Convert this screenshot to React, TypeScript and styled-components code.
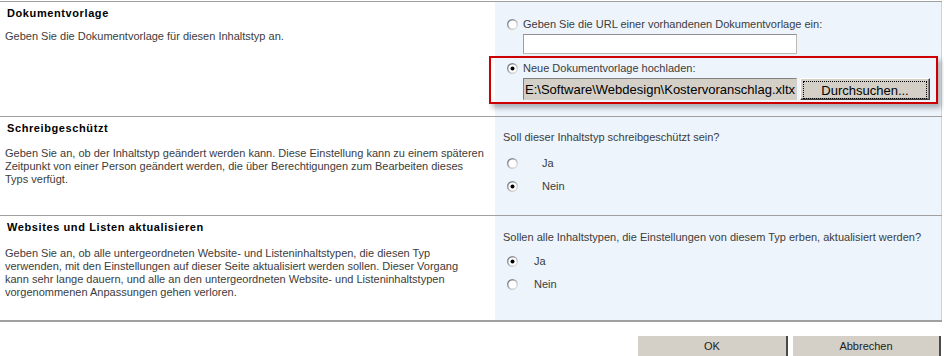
import React from 'react';
import styled, { createGlobalStyle } from 'styled-components';

const GlobalStyle = createGlobalStyle`
  body {
    margin: 0;
    background: #fff;
    font-family: "Liberation Sans", Arial, sans-serif;
    font-size: 11px;
    color: #3c3c3c;
  }
`;

const Page = styled.div`
  width: 944px;
  padding-top: 1px;
`;

const Section = styled.div<{ $h: number; $last?: boolean }>`
  display: grid;
  grid-template-columns: 495px 447px;
  width: 942px;
  height: ${p => p.$h}px;
  border-top: 1px solid #a0a0a0;
  border-bottom: ${p => (p.$last ? '2px solid #a0a0a0' : 'none')};
`;

// linke Spalte: Titel + Beschreibung
const InfoCol = styled.div`
  padding: 5px 5px 0 5px;
`;

const Title = styled.h3`
  margin: 0 0 0 2px;
  font-size: 11px;
  line-height: 13px;
  font-weight: bold;
  letter-spacing: 0.6px;
  color: #000;
`;

const Desc = styled.p<{ $gap: number }>`
  margin: ${p => p.$gap}px 0 0;
  line-height: 13px;
  white-space: nowrap;
`;

// rechte Spalte: Steuerelemente
const FieldCol = styled.div<{ $top: number }>`
  background: #edf4fb;
  border-right: 1px solid #cfd3d8;
  padding: ${p => p.$top}px 0 0 8px;
`;

const Question = styled.div`
  line-height: 13px;
`;

const OptionRow = styled.label<{ $gap: number; $mt?: number; $pl?: number }>`
  display: flex;
  align-items: center;
  height: 13px;
  margin-top: ${p => p.$mt ?? 0}px;
  padding-left: ${p => p.$pl ?? 3}px;
  gap: ${p => p.$gap}px;
  line-height: 13px;
`;

const RadioIcon = styled.svg`
  flex: none;
  display: block;
`;

const TextInput = styled.input`
  display: block;
  box-sizing: border-box;
  width: 274px;
  height: 20px;
  margin: 3px 0 0 20px;
  border: 1px solid #bdb9b1;
  border-top-color: #8f8f8f;
  border-left-color: #9d9d9d;
  background: #fff;
  outline: none;
`;

const Highlight = styled.div`
  box-sizing: border-box;
  width: 449px;
  height: 48px;
  margin: 2px 0 0 -14px;
  padding: 4px 0 0 15px;
  border: 2px solid #cc0000;
  box-shadow: 3px 4px 5px rgba(0, 0, 0, 0.28);
`;

const UploadRow = styled.div`
  display: flex;
  gap: 3px;
  margin: 3px 0 0 17px;
`;

const FileBox = styled.input`
  box-sizing: border-box;
  width: 274px;
  height: 22px;
  padding: 0 0 0 1px;
  border: 1px solid #d4d0c8;
  border-top-color: #808080;
  border-left-color: #808080;
  background: #d4d0c8;
  font-family: "Liberation Sans", Arial, sans-serif;
  font-size: 13px;
  color: #000;
  outline: none;
`;

const BrowseButton = styled.button`
  box-sizing: border-box;
  width: 130px;
  height: 22px;
  padding: 2px;
  border: 1px solid;
  border-color: #ffffff #404040 #404040 #ffffff;
  box-shadow: inset -1px -1px 0 #808080;
  background: #d4d0c8;
  font-family: "Liberation Sans", Arial, sans-serif;
  font-size: 13px;
  color: #000;
`;

const FocusRect = styled.span`
  display: flex;
  align-items: center;
  justify-content: center;
  height: 100%;
  border: 1px dotted #000;
`;

const Footer = styled.div`
  display: flex;
  justify-content: flex-end;
  gap: 5px;
  padding: 14px 3px 0 0;
`;

const ActionButton = styled.button<{ $w: number }>`
  box-sizing: border-box;
  width: ${p => p.$w}px;
  height: 21px;
  padding: 0;
  border: none;
  border-right: 2px solid #4a4a4a;
  border-bottom: 1px solid #9a9a9a;
  background: #d4d0c8;
  font-family: "Liberation Sans", Arial, sans-serif;
  font-size: 11px;
  color: #222;
`;

const Radio: React.FC<{ checked?: boolean }> = ({ checked }) => (
  <RadioIcon width="13" height="13" viewBox="0 0 13 13">
    <defs>
      <linearGradient id="radioRing" x1="0" y1="0" x2="1" y2="1">
        <stop offset="0" stopColor="#5f6b78" />
        <stop offset="0.55" stopColor="#b9b9b9" />
        <stop offset="1" stopColor="#ececec" />
      </linearGradient>
    </defs>
    <circle cx="6.5" cy="6.5" r="4.8" fill="#fff" stroke="url(#radioRing)" strokeWidth="1.4" />
    {checked && <circle cx="6.5" cy="6.5" r="2" fill="#000" />}
  </RadioIcon>
);

export default function App() {
  return (
    <Page>
      <GlobalStyle />

      <Section $h={114}>
        <InfoCol>
          <Title>Dokumentvorlage</Title>
          <Desc $gap={10}>Geben Sie die Dokumentvorlage für diesen Inhaltstyp an.</Desc>
        </InfoCol>
        <FieldCol $top={16}>
          <OptionRow $gap={4}>
            <Radio />
            Geben Sie die URL einer vorhandenen Dokumentvorlage ein:
          </OptionRow>
          <TextInput type="text" />
          <Highlight>
            <OptionRow $gap={4} $pl={0}>
              <Radio checked />
              Neue Dokumentvorlage hochladen:
            </OptionRow>
            <UploadRow>
              <FileBox readOnly defaultValue="E:\Software\Webdesign\Kostervoranschlag.xltx" />
              <BrowseButton>
                <FocusRect>Durchsuchen...</FocusRect>
              </BrowseButton>
            </UploadRow>
          </Highlight>
        </FieldCol>
      </Section>

      <Section $h={98}>
        <InfoCol>
          <Title>Schreibgeschützt</Title>
          <Desc $gap={12}>
            Geben Sie an, ob der Inhaltstyp geändert werden kann. Diese Einstellung kann zu einem späteren
            <br />
            Zeitpunkt von einer Person geändert werden, die über Berechtigungen zum Bearbeiten dieses
            <br />
            Typs verfügt.
          </Desc>
        </InfoCol>
        <FieldCol $top={14}>
          <Question>Soll dieser Inhaltstyp schreibgeschützt sein?</Question>
          <OptionRow $gap={23} $mt={13}>
            <Radio />
            Ja
          </OptionRow>
          <OptionRow $gap={23} $mt={10}>
            <Radio checked />
            Nein
          </OptionRow>
        </FieldCol>
      </Section>

      <Section $h={104} $last>
        <InfoCol>
          <Title>Websites und Listen aktualisieren</Title>
          <Desc $gap={13}>
            Geben Sie an, ob alle untergeordneten Website- und Listeninhaltstypen, die diesen Typ
            <br />
            verwenden, mit den Einstellungen auf dieser Seite aktualisiert werden sollen. Dieser Vorgang
            <br />
            kann sehr lange dauern, und alle an den untergeordneten Website- und Listeninhaltstypen
            <br />
            vorgenommenen Anpassungen gehen verloren.
          </Desc>
        </InfoCol>
        <FieldCol $top={15}>
          <Question>Sollen alle Inhaltstypen, die Einstellungen von diesem Typ erben, aktualisiert werden?</Question>
          <OptionRow $gap={15} $mt={11}>
            <Radio checked />
            Ja
          </OptionRow>
          <OptionRow $gap={15} $mt={10}>
            <Radio />
            Nein
          </OptionRow>
        </FieldCol>
      </Section>

      <Footer>
        <ActionButton $w={150}>OK</ActionButton>
        <ActionButton $w={148}>Abbrechen</ActionButton>
      </Footer>
    </Page>
  );
}
